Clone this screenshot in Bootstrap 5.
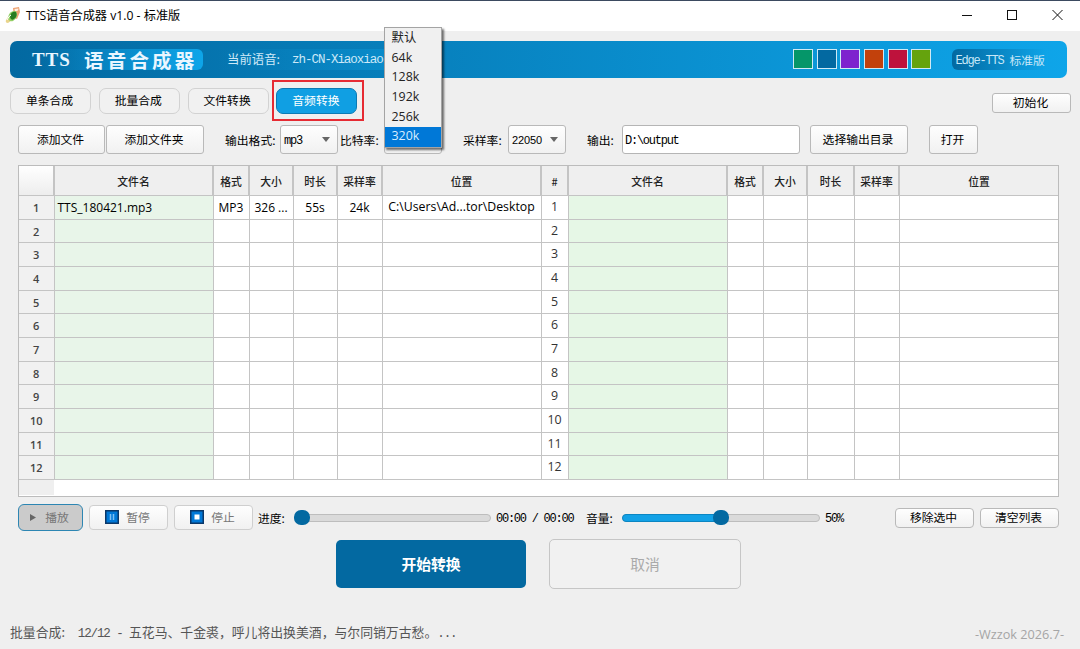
<!DOCTYPE html>
<html lang="zh-CN">
<head>
<meta charset="utf-8">
<title>TTS语音合成器 v1.0 - 标准版</title>
<meta name="viewport" content="width=device-width, initial-scale=1">
<link href="https://cdn.jsdelivr.net/npm/bootstrap@5.3.0/dist/css/bootstrap.min.css" rel="stylesheet">
<style>
  :root { --deep:#0369a1; --sky:#0ea5e9; --face:#efefef; --line:#c4c4c4; }
  html, body { height:649px; overflow:hidden; }
  body { background:var(--face); color:#000; font:11.8px/1 "Noto Sans CJK SC",sans-serif; }
  .mono { font-family:"Liberation Mono","Noto Sans CJK SC",monospace; font-size:12px; letter-spacing:-1.25px; white-space:pre; padding-top:2px; }
  .ui { font-family:"Open Sans","Noto Sans CJK SC",sans-serif; font-size:12px; }
  .titlebar { height:31px; background:#fff; border-top:1px solid #3b4a60; padding-left:5px; }
  .titlebar .ui { margin-left:5px; white-space:pre; font-size:12.2px; }
  .wctl { width:45px; }
  .banner { height:37px; margin:10px 13px 0 10px; border-radius:7px; background:linear-gradient(90deg,var(--deep),var(--sky)); color:#fff; padding-left:12px; }
  .brand { width:181px; height:21px; border-radius:6px; padding-left:10px; background:linear-gradient(90deg,rgba(14,165,233,0) 10%,var(--sky)); font-size:19.5px; font-weight:700; letter-spacing:3.2px; color:#e9f6ff; white-space:nowrap; }
  .brand span { font:700 19px "Liberation Serif",serif; letter-spacing:.9px; width:52px; }
  .voice { margin-left:14px; width:184px; height:21px; border-radius:6px; padding-left:10px; background:linear-gradient(90deg,rgba(14,165,233,0),rgba(14,165,233,.35)); color:#cde9f8; font-size:12.4px; white-space:nowrap; overflow:hidden; }
  .voice .mono { font-size:12.5px; letter-spacing:-1.02px; }
  .swatches { margin-left:392px; gap:3.7px; margin-top:-2px; }
  .swatch { width:20px; height:20px; border:1px solid #cfe9f5; }
  .edition { margin-left:21px; width:96px; height:21px; border-radius:6px; padding-left:3px; background:linear-gradient(90deg,var(--deep),var(--sky)); color:#c9e8f8; white-space:pre; }
  .edition .mono { letter-spacing:-1.2px; }
  .btn.qt { --bs-btn-font-size:11.8px; --bs-btn-padding-x:0; --bs-btn-padding-y:0; --bs-btn-border-radius:3px; --bs-btn-color:#000; --bs-btn-border-color:#b9b9b9; --bs-btn-disabled-color:#777; --bs-btn-disabled-border-color:#cfcfcf; --bs-btn-disabled-opacity:1; line-height:1; background:linear-gradient(#fefefe,#f1f1f1); display:flex; align-items:center; justify-content:center; white-space:nowrap; height:29px; flex:none; padding:0 2px 1px 0; }
  .btn.tab { width:81px; height:26px; border-radius:7px; background:#f1f1f1; border-color:#d2d2d2; }
  .btn.tab.active { background:#109fe3; border-color:#0b7ab4; color:#fff; }
  .tabs { margin:9.5px 9px 0 10px; height:33px; gap:7.8px; }
  .ring { width:92px; height:41px; border:2px solid #e62b33; left:-4px; top:-8px; pointer-events:none; }
  .tools { height:29px; margin:4.5px 21px 0 18px; }
  .combo { height:29px; border:1px solid #b9b9b9; border-radius:3px; background:linear-gradient(#fefefe,#f1f1f1); padding:0 7px 0 3px; flex:none; }
  .combo i { border:4px solid transparent; border-top:5px solid #666; border-bottom:0; }
  .path { width:178px; height:29px; border:1px solid #b5b5b5; border-radius:3px; background:#fff; padding:0 0 0 2px; }
  .drop { left:-1px; top:-99px; width:58px; height:121px; z-index:5; background:#f0f0f0; border:1px solid #a4a4a4; box-shadow:2px 2px 2px rgba(0,0,0,.55); padding-top:1px; }
  .drop div { height:19.7px; padding-left:6.5px; line-height:18px; font-size:12.4px; color:#222; }
  .drop div.sel { background:#0078d7; color:#d8edff; }
  .sheet { height:332px; margin:10.5px 21px 0 18px; background:#fff; border:1px solid #bcbcbc; }
  .sheet table { table-layout:fixed; border-collapse:collapse; width:1039px; }
  .sheet th, .sheet td { padding:0; height:24px; border-right:1px solid var(--line); border-bottom:1px solid var(--line); text-align:center; vertical-align:middle; white-space:nowrap; overflow:hidden; font-weight:400; }
  .sheet tr:nth-child(3n+2) td, .sheet tr:nth-child(3n+2) th { height:23px; }
  .sheet thead th { height:30px !important; background:#efefef; font-size:10.8px; font-weight:500; color:#222; border-right-width:2px; padding-top:2px; }
  .sheet th:last-child, .sheet td:last-child { border-right:0; }
  .sheet tbody th { background:#f1f1f1; font-size:11px; font-weight:600; color:#444; }
  .sheet .g1 { background:#e8f5e9; text-align:left; padding-left:3px; }
  .sheet .g2 { background:#e6f7e6; }
  .sheet .num { color:#333; font-size:12.4px; }
  .sheet td:nth-child(7) { font-size:12.3px; }
  .rail { width:35px; height:15px; background:#efefef; }
  .player { height:27px; margin:7.5px 21px 0 18px; }
  .player .btn.qt { height:25px; width:79px; border-radius:4px; }
  .player .btn.play { width:65px; height:27px; border:1.5px solid #2d86b3; border-radius:6px; background:#cbcbcb; }
  .player .btn.small-h { height:20px; }
  .groove { height:8px; border:1px solid #bdbdbd; border-radius:4px; background:#dadada; }
  .fillbar { height:8px; border:1px solid #0b86c2; border-radius:4px; background:#12a1e6; left:-1px; top:-1px; }
  .knob { width:16px; height:15px; border-radius:7px; background:#0369a1; top:-4.5px; }
  .big { height:49px; border-radius:5px; font-size:14.8px; flex:none; }
  .go { width:190px; background:#0369a1; color:#fff; height:48px; }
  .stopall { width:192px; border:1.5px solid #c6c6c6; background:#f1f1f1; color:#aaa; height:50px; }
  .status { margin:35px 16px 0 10px; color:#555; font-size:12.85px; white-space:nowrap; height:18px; }
  .status .mono { font-size:12.5px; letter-spacing:-1.1px; }
</style>
</head>
<body>
<div class="titlebar d-flex align-items-center">
  <svg width="16" height="18" viewBox="0 0 16 18"><path d="M1 13q-1 3 2 3l3-2-3-4z" fill="#e9d48c"/><path d="M8 1l6-1 1 5-3 7-3-1z" fill="#eea373"/><path d="M9.500 2l4-.5-.5 2-3 1z" fill="#fff1e5"/><path d="M3 11Q4 3 11 4Q14 10 8 14Q4 15 3 11z" fill="#91cf65"/><path d="M5 10Q6 4 11 5Q13 9 9 12Q6 14 5 10z" fill="#277c22"/><path d="M2 13q2-4 4-5" stroke="#fff" fill="none"/></svg>
  <span class="ui">TTS语音合成器 v1.0 - 标准版</span>
  <div class="ms-auto d-flex">
    <svg class="wctl" height="30" viewBox="0 0 45 30" fill="none" stroke="#111"><path d="M17 14.500h10"/></svg>
    <svg class="wctl" height="30" viewBox="0 0 45 30" fill="none" stroke="#111"><rect x="17.500" y="9.500" width="9" height="9"/></svg>
    <svg class="wctl" height="30" viewBox="0 0 45 30" fill="none" stroke="#111"><path d="M17.500 9l10 10M27.500 9l-10 10"/></svg>
  </div>
</div>

<header class="banner d-flex align-items-center">
  <div class="brand d-flex align-items-center"><span>TTS</span>语音合成器</div>
  <div class="voice d-flex align-items-center">当前语音:<span class="mono ms-2 ps-1">zh-CN-Xiaoxiao</span></div>
  <div class="swatches d-flex">
    <div class="swatch" style="background:#059669"></div><div class="swatch" style="background:#0369a1"></div><div class="swatch" style="background:#7e22ce"></div><div class="swatch" style="background:#c2410c"></div><div class="swatch" style="background:#be123c"></div><div class="swatch" style="background:#65a30d"></div>
  </div>
  <div class="edition d-flex align-items-center"><span class="mono">Edge-TTS </span>标准版</div>
</header>

<nav class="tabs d-flex align-items-start">
  <button class="btn qt tab">单条合成</button>
  <button class="btn qt tab">批量合成</button>
  <button class="btn qt tab">文件转换</button>
  <div class="position-relative"><button class="btn qt tab active">音频转换</button><div class="ring position-absolute"></div></div>
  <button class="btn qt ms-auto" style="width:79px;height:20px;margin-top:5px">初始化</button>
</nav>

<section class="tools d-flex align-items-center">
  <button class="btn qt" style="width:87px">添加文件</button>
  <button class="btn qt" style="width:98px;margin-left:1px">添加文件夹</button>
  <span class="text-nowrap" style="margin-left:21px;width:55px">输出格式:</span>
  <div class="combo d-flex align-items-center justify-content-between" style="width:58px"><span class="mono">mp3</span><i></i></div>
  <span class="text-nowrap" style="margin-left:2px;width:44px">比特率:</span>
  <div class="combo position-relative" style="width:58px">
    <div class="drop position-absolute ui"><div>默认</div><div>64k</div><div>128k</div><div>192k</div><div>256k</div><div class="sel">320k</div></div>
  </div>
  <span class="text-nowrap" style="margin-left:21px;width:45px">采样率:</span>
  <div class="combo d-flex align-items-center justify-content-between" style="width:58px"><span class="mono" style="font-family:'Liberation Sans',sans-serif;font-size:11px;letter-spacing:-.1px">22050</span><i></i></div>
  <span class="text-nowrap" style="margin-left:21px;width:35px">输出:</span>
  <div class="path d-flex align-items-center"><span class="mono">D:\output</span></div>
  <button class="btn qt" style="width:98px;margin-left:10px">选择输出目录</button>
  <button class="btn qt" style="width:49px;margin-left:21px">打开</button>
</section>

<section class="sheet">
  <table>
    <colgroup><col style="width:35px"><col style="width:159px"><col style="width:36px"><col style="width:44px"><col style="width:44px"><col style="width:45px"><col style="width:159px"><col style="width:27px"><col style="width:159px"><col style="width:36px"><col style="width:44px"><col style="width:47px"><col style="width:45px"><col style="width:159px"></colgroup>
    <thead><tr><th style="background:linear-gradient(#fff,#ededed)"></th><th>文件名</th><th>格式</th><th>大小</th><th>时长</th><th>采样率</th><th>位置</th><th>#</th><th>文件名</th><th>格式</th><th>大小</th><th>时长</th><th>采样率</th><th>位置</th></tr></thead>
    <tbody id="rows" class="ui"></tbody>
  </table>
  <div class="rail"></div>
</section>

<section class="player d-flex align-items-center">
  <button class="btn qt play" disabled><svg width="7" height="7" class="me-2"><path d="M0 0l6 3.500-6 3.500z" fill="#666"/></svg>播放</button>
  <button class="btn qt" disabled style="margin-left:6px"><svg width="14" height="14" style="margin-right:7px"><rect x=".75" y=".75" width="12.500" height="12.500" fill="#0078d7" stroke="#0b3768" stroke-width="1.500"/><path d="M5.500 4v6M8.500 4v6" stroke="#7cc0f5" stroke-width="1.500"/></svg>暂停</button>
  <button class="btn qt" disabled style="margin-left:6px"><svg width="14" height="14" style="margin-right:7px"><rect x=".75" y=".75" width="12.500" height="12.500" fill="#0078d7" stroke="#0b3768" stroke-width="1.500"/><rect x="4.500" y="4.500" width="5" height="5" fill="#fff"/></svg>停止</button>
  <span class="text-nowrap" style="margin-left:5px;width:36px">进度:</span>
  <div class="groove position-relative" style="width:197px"><div class="knob position-absolute" style="left:-1px"></div></div>
  <span class="mono" style="margin-left:5px;width:90px">00:00 / 00:00</span>
  <span class="text-nowrap" style="width:36px">音量:</span>
  <div class="groove position-relative" style="width:198px"><div class="fillbar position-absolute" style="width:50%"></div><div class="knob position-absolute" style="left:90px"></div></div>
  <span class="mono" style="margin-left:5px">50%</span>
  <button class="btn qt small-h ms-auto">移除选中</button>
  <button class="btn qt small-h" style="margin-left:6px">清空列表</button>
</section>

<section class="d-flex justify-content-center align-items-center" style="margin-top:8px;gap:23px;padding-right:3px">
  <button class="btn big go fw-bold p-0">开始转换</button>
  <button class="btn big stopall p-0">取消</button>
</section>

<footer class="status d-flex align-items-center justify-content-between">
  <div>批量合成:<span class="mono">  12/12 - </span>五花马、千金裘，呼儿将出换美酒，与尔同销万古愁。<span class="mono">...</span></div>
  <span class="ui" style="color:#a5a5a5;font-size:12.7px;padding-top:3px">-Wzzok 2026.7-</span>
</footer>

<script>
  const first = ['TTS_180421.mp3', 'MP3', '326 ...', '55s', '24k', 'C:\\Users\\Ad...tor\\Desktop'];
  let html = '';
  for (let n = 1; n <= 12; n++) {
    html += `<tr><th>${n}</th>`;
    first.forEach((t, i) => html += `<td class="${i ? '' : 'g1'}">${n === 1 ? t : ''}</td>`);
    html += `<td class="num">${n}</td><td class="g2"></td>` + '<td></td>'.repeat(5) + '</tr>';
  }
  document.getElementById('rows').innerHTML = html;
</script>
<script src="https://cdn.jsdelivr.net/npm/bootstrap@5.3.0/dist/js/bootstrap.bundle.min.js"></script>
</body>
</html>
